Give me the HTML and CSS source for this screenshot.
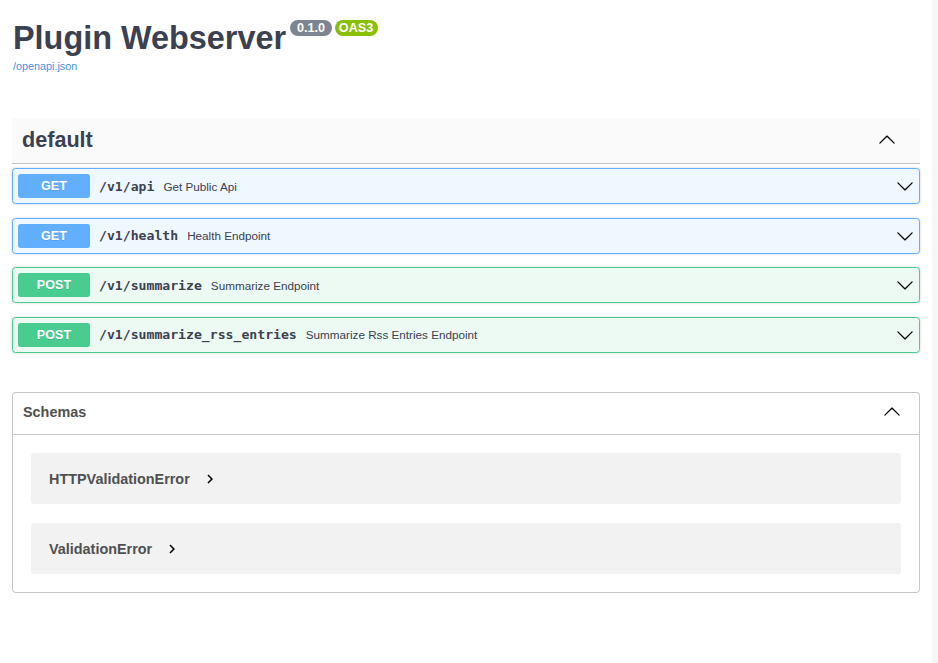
FILE: index.html
```html
<!DOCTYPE html>
<html>
<head>
<meta charset="utf-8">
<title>Plugin Webserver</title>
<link rel="stylesheet" href="styles.css">
</head>
<body>
<div class="page">
  <main class="main">
    <section class="info">
      <div class="title-row">
        <h2 class="title">Plugin Webserver</h2>
        <div class="badges">
          <span class="badge badge-version">0.1.0</span>
          <span class="badge badge-oas">OAS3</span>
        </div>
      </div>
      <a class="spec-link" href="#">/openapi.json</a>
    </section>

    <section class="tag-section">
      <div class="tag-header">
        <h3 class="tag-name">default</h3>
        <svg class="arrow" width="18" height="18" viewBox="0 0 20 20"><path d="M17.418 13.891c.272.268.709.268.979 0s.271-.701 0-.969l-7.908-7.83c-.27-.268-.707-.268-.979 0l-7.908 7.83c-.27.268-.27.701 0 .969.271.268.709.268.979 0L10 6.75l7.418 7.141z"/></svg>
      </div>
      <div class="ops">
        <div class="op op-get">
          <span class="method">GET</span>
          <span class="path">/v1/api</span>
          <span class="desc">Get Public Api</span>
          <svg class="arrow op-arrow" width="18" height="18" viewBox="0 0 20 20"><path d="M17.418 6.109c.272-.268.709-.268.979 0s.271.701 0 .969l-7.908 7.83c-.27.268-.707.268-.979 0l-7.908-7.83c-.27-.268-.27-.701 0-.969.271-.268.709-.268.979 0L10 13.25l7.418-7.141z"/></svg>
        </div>
        <div class="op op-get">
          <span class="method">GET</span>
          <span class="path">/v1/health</span>
          <span class="desc">Health Endpoint</span>
          <svg class="arrow op-arrow" width="18" height="18" viewBox="0 0 20 20"><path d="M17.418 6.109c.272-.268.709-.268.979 0s.271.701 0 .969l-7.908 7.83c-.27.268-.707.268-.979 0l-7.908-7.83c-.27-.268-.27-.701 0-.969.271-.268.709-.268.979 0L10 13.25l7.418-7.141z"/></svg>
        </div>
        <div class="op op-post">
          <span class="method">POST</span>
          <span class="path">/v1/summarize</span>
          <span class="desc">Summarize Endpoint</span>
          <svg class="arrow op-arrow" width="18" height="18" viewBox="0 0 20 20"><path d="M17.418 6.109c.272-.268.709-.268.979 0s.271.701 0 .969l-7.908 7.83c-.27.268-.707.268-.979 0l-7.908-7.83c-.27-.268-.27-.701 0-.969.271-.268.709-.268.979 0L10 13.25l7.418-7.141z"/></svg>
        </div>
        <div class="op op-post">
          <span class="method">POST</span>
          <span class="path">/v1/summarize_rss_entries</span>
          <span class="desc">Summarize Rss Entries Endpoint</span>
          <svg class="arrow op-arrow" width="18" height="18" viewBox="0 0 20 20"><path d="M17.418 6.109c.272-.268.709-.268.979 0s.271.701 0 .969l-7.908 7.83c-.27.268-.707.268-.979 0l-7.908-7.83c-.27-.268-.27-.701 0-.969.271-.268.709-.268.979 0L10 13.25l7.418-7.141z"/></svg>
        </div>
      </div>
    </section>

    <section class="models">
      <div class="models-header">
        <h4 class="models-title">Schemas</h4>
        <svg class="arrow" width="18" height="18" viewBox="0 0 20 20"><path d="M17.418 13.891c.272.268.709.268.979 0s.271-.701 0-.969l-7.908-7.83c-.27-.268-.707-.268-.979 0l-7.908 7.83c-.27.268-.27.701 0 .969.271.268.709.268.979 0L10 6.75l7.418 7.141z"/></svg>
      </div>
      <div class="models-body">
        <div class="model">
          <span class="model-title">HTTPValidationError</span>
          <svg class="model-toggle" width="18" height="18" viewBox="0 0 24 24"><path d="M10 6L8.59 7.41 13.17 12l-4.58 4.59L10 18l6-6z"/></svg>
        </div>
        <div class="model">
          <span class="model-title">ValidationError</span>
          <svg class="model-toggle" width="18" height="18" viewBox="0 0 24 24"><path d="M10 6L8.59 7.41 13.17 12l-4.58 4.59L10 18l6-6z"/></svg>
        </div>
      </div>
    </section>
  </main>
  <div class="scroll-track"></div>
</div>
</body>
</html>
```

FILE: styles.css
```css
* { box-sizing: border-box; }

html, body {
  margin: 0;
  padding: 0;
  background: #fff;
}

body {
  font-family: "Liberation Sans", Arial, sans-serif;
  color: #3b4151;
}

.page {
  display: flex;
  min-height: 663px;
}

.main {
  flex: 1;
  padding: 20px 12px 0 12px;
}

.scroll-track {
  width: 6px;
  background: #f6f6f6;
}

/* info */
.title-row {
  display: flex;
  align-items: flex-start;
}

.title {
  margin: 0 0 0 1px;
  font-size: 32.4px;
  line-height: 36px;
  font-weight: 700;
  color: #3b4151;
}

.badges {
  display: flex;
  gap: 2.5px;
  margin-left: 4px;
}

.badge {
  display: block;
  height: 16px;
  line-height: 16px;
  border-radius: 57px;
  color: #fff;
  font-size: 12.6px;
  font-weight: 700;
  text-align: center;
}

.badge-version {
  width: 42px;
  background: #7d8492;
}

.badge-oas {
  width: 43px;
  background: #89bf04;
}

.spec-link {
  display: block;
  margin: 4px 0 0 1px;
  font-size: 10.8px;
  line-height: 13px;
  color: #4990e2;
  text-decoration: none;
}

/* tag */
.tag-section {
  margin-top: 45px;
}

.tag-header {
  display: flex;
  align-items: center;
  height: 46px;
  padding: 0 24px 2px 10px;
  background: #fafafa;
  border-bottom: 1px solid rgba(59, 65, 81, 0.3);
}

.tag-name {
  flex: 1;
  margin: 0;
  font-size: 21.6px;
  font-weight: 700;
  color: #3b4151;
}

.arrow {
  display: block;
  fill: #000;
  flex: none;
}

.ops {
  display: flex;
  flex-direction: column;
  gap: 13.5px;
  margin-top: 4px;
}

.op {
  display: flex;
  align-items: center;
  height: 36px;
  padding: 0 5px;
  border: 1px solid;
  border-radius: 3.6px;
  box-shadow: 0 0 2.7px rgba(0, 0, 0, 0.19);
}

.op-get {
  background: #eff7ff;
  border-color: #61affe;
}

.op-post {
  background: #edfaf4;
  border-color: #49cc90;
}

.method {
  flex: none;
  width: 72px;
  height: 24px;
  line-height: 24px;
  border-radius: 2.7px;
  color: #fff;
  font-size: 12.6px;
  font-weight: 700;
  text-align: center;
  text-shadow: 0 1px 0 rgba(0, 0, 0, 0.1);
}

.op-get .method { background: #61affe; }
.op-post .method { background: #49cc90; }

.path {
  padding: 0 9px;
  font-family: "DejaVu Sans Mono", "Liberation Mono", monospace;
  font-size: 13.15px;
  font-weight: 700;
  color: #3b4151;
}

.desc {
  flex: 1;
  font-size: 11.7px;
  color: #3b4151;
}

/* models */
.models {
  margin-top: 39.5px;
  border: 1px solid rgba(59, 65, 81, 0.3);
  border-radius: 3.6px;
}

.models-header {
  display: flex;
  align-items: center;
  height: 42px;
  padding: 0 18px 3px 10px;
  border-bottom: 1px solid rgba(59, 65, 81, 0.3);
}

.models-title {
  flex: 1;
  margin: 0;
  font-size: 14.4px;
  font-weight: 700;
  color: #505050;
}

.models-body {
  display: flex;
  flex-direction: column;
  gap: 19px;
  padding: 18px;
}

.model {
  display: flex;
  align-items: center;
  height: 51px;
  padding: 0 18px;
  background: #f2f2f2;
  border-radius: 3.6px;
}

.model-title {
  font-size: 14.4px;
  font-weight: 700;
  color: #505050;
}

.model-toggle {
  display: block;
  margin-left: 11px;
  fill: #000;
}
```
